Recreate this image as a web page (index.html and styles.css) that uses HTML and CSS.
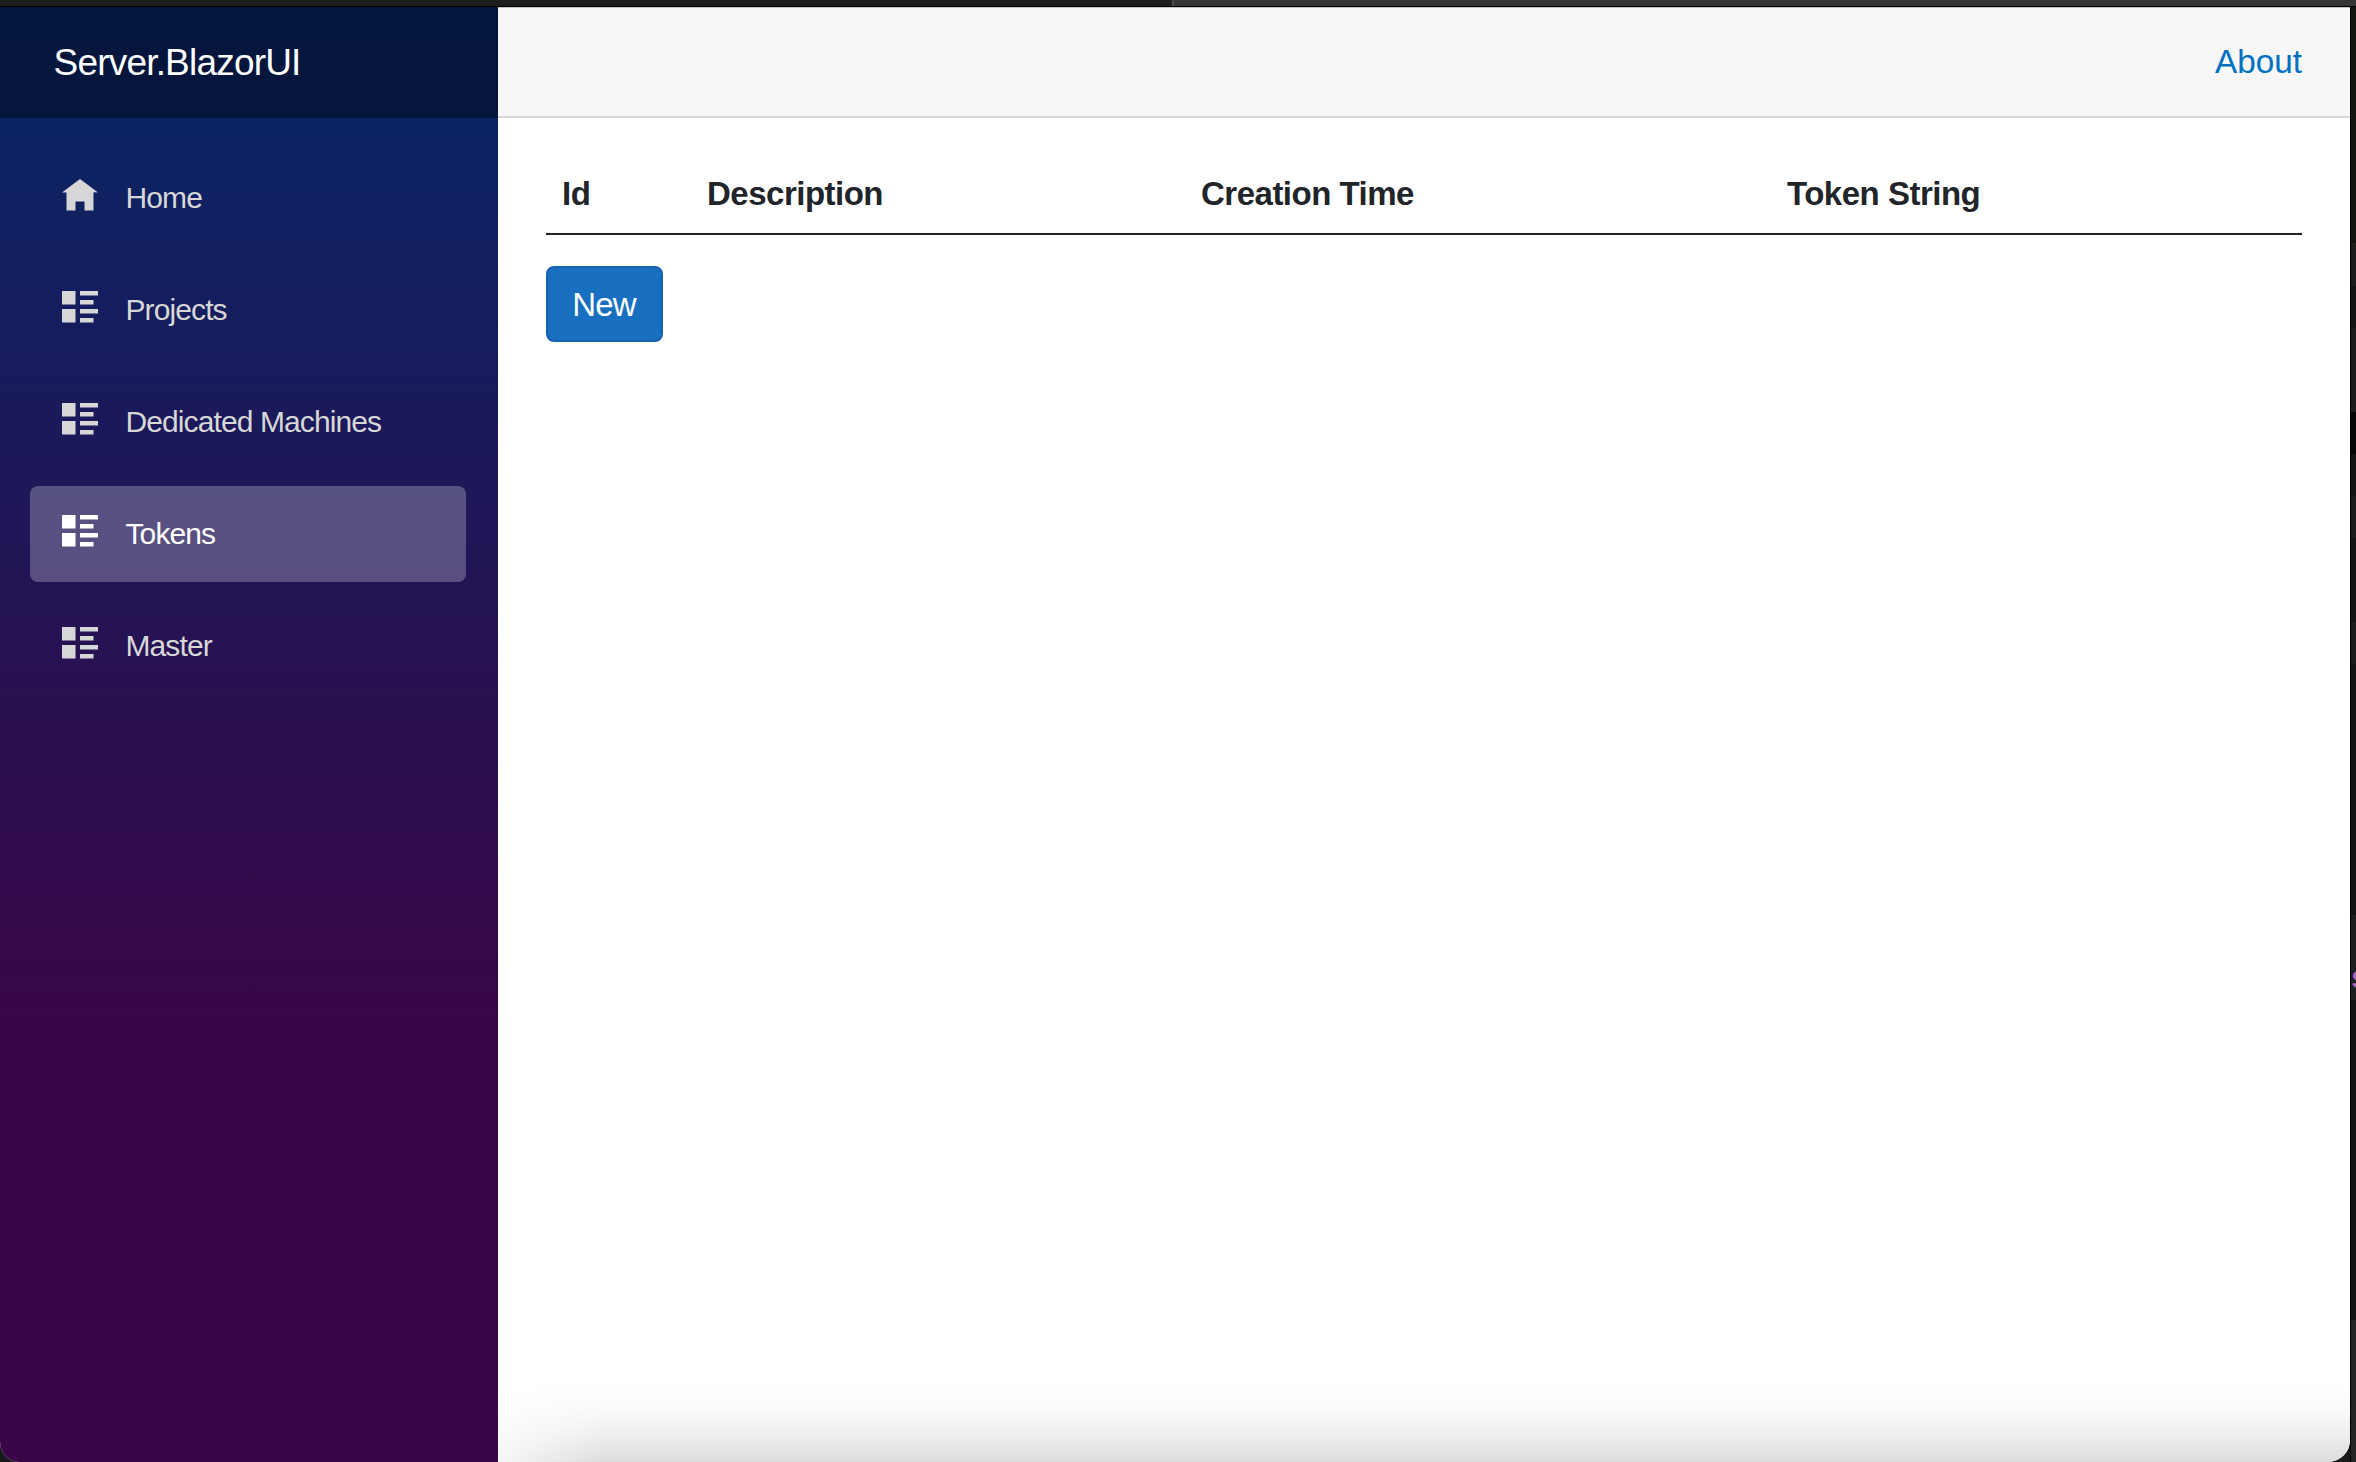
FILE: index.html
```html
<!DOCTYPE html>
<html lang="en">
<head>
<meta charset="utf-8">
<title>Server.BlazorUI</title>
<link rel="stylesheet" href="styles.css">
</head>
<body>
<svg class="sprite" aria-hidden="true">
  <symbol id="home" viewBox="0 0 8 8"><path d="M4 0l-4 3h1v4h2v-2h2v2h2v-4.03l1 .03-4-3z"/></symbol>
  <symbol id="list-rich" viewBox="0 0 8 8"><path d="M0 0v3h3v-3h-3zm4 0v1h4v-1h-4zm0 2v1h3v-1h-3zm-4 2v3h3v-3h-3zm4 0v1h4v-1h-4zm0 2v1h3v-1h-3z"/></symbol>
</svg>
<div class="backdrop-top"><div class="tab"></div></div>
<div class="desktop">
  <div class="window">
    <aside class="sidebar">
      <div class="brand">Server.BlazorUI</div>
      <nav class="menu">
        <a class="item"><svg class="icon"><use href="#home"/></svg><span>Home</span></a>
        <a class="item"><svg class="icon"><use href="#list-rich"/></svg><span>Projects</span></a>
        <a class="item"><svg class="icon"><use href="#list-rich"/></svg><span>Dedicated Machines</span></a>
        <a class="item active"><svg class="icon"><use href="#list-rich"/></svg><span>Tokens</span></a>
        <a class="item"><svg class="icon"><use href="#list-rich"/></svg><span>Master</span></a>
      </nav>
    </aside>
    <main class="main">
      <header class="top-row"><a class="about">About</a></header>
      <section class="content">
        <div class="table-head">
          <div>Id</div><div>Description</div><div>Creation Time</div><div>Token String</div>
        </div>
        <button class="btn">New</button>
      </section>
    </main>
  </div>
  <div class="edge"><span class="glyph">s</span></div>
</div>
</body>
</html>
```
FILE: styles.css
```css
* { box-sizing: border-box; }
body {
  margin: 0;
  width: 2356px;
  height: 1462px;
  overflow: hidden;
  display: flex;
  flex-direction: column;
  background: #181a1c;
  font: 32px/48px "Liberation Sans", Arial, sans-serif;
  color: #212529;
}
.sprite { position: absolute; width: 0; height: 0; }
.backdrop-top {
  height: 7px;
  flex: none;
  padding-left: 1172px;
  background: #1d1d1d;
  border-bottom: 1px solid #000;
}
.tab { height: 6px; background: #343537; border-left: 2px solid #48494b; }
.desktop { flex: 1; display: flex; min-height: 0; }
.window {
  width: 2350px;
  display: flex;
  overflow: hidden;
  border-radius: 0 0 22px 20px;
  background: #fff;
}
.sidebar {
  width: 498px;
  flex: none;
  background: linear-gradient(180deg, rgb(5, 39, 103) 0%, #3a0647 70%);
}
.brand {
  height: 111px;
  padding-left: 53.5px;
  line-height: 111px;
  font-size: 37px;
  letter-spacing: -0.8px;
  color: #fff;
  background: rgba(0, 0, 0, 0.4);
}
.menu { padding: 32px 32px 0 30px; display: flex; flex-direction: column; gap: 16px; }
.item {
  height: 96px;
  padding-left: 32px;
  display: flex;
  align-items: flex-start;
  gap: 27.5px;
  border-radius: 8px;
  font-size: 30px;
  letter-spacing: -0.9px;
  line-height: 96px;
  color: #d7d7d7;
}
.item.active { color: #fff; background: rgba(255, 255, 255, 0.25); }
.icon { width: 36px; height: 36px; margin-top: 28.5px; fill: currentColor; flex: none; }
.main {
  flex: 1;
  background:
    linear-gradient(90deg, rgba(255, 255, 255, 0.75), rgba(255, 255, 255, 0) 110px),
    linear-gradient(0deg, #dcdcdc 0, #ededed 25px, #f9f9f9 50px, #fff 78px);
}
.top-row {
  height: 111px;
  padding-right: 48px;
  display: flex;
  justify-content: flex-end;
  line-height: 107px;
  background: #f7f7f7;
  border-top: 1px solid #c4c4c0;
  border-bottom: 2px solid #d6d5d5;
}
.about { color: #0071c1; font-size: 33.3px; }
.content { padding: 35px 48px 0; display: flex; flex-direction: column; align-items: flex-start; }
.table-head {
  width: 100%;
  height: 82px;
  padding: 17px 0 0 16px;
  display: grid;
  grid-template-columns: 145px 494px 586px 1fr;
  font-size: 33px;
  font-weight: 700;
  letter-spacing: -0.5px;
  border-bottom: 2px solid #212529;
}
.btn {
  width: 117px;
  height: 76px;
  margin-top: 31px;
  padding: 2px 1px 0 0;
  font: inherit;
  font-size: 33px;
  letter-spacing: -0.8px;
  color: #fff;
  background: #186ebf;
  border: 2px solid #1861ac;
  border-radius: 8px;
}
.edge {
  flex: 1;
  overflow: hidden;
  border-left: 1px solid #000;
  background: linear-gradient(
    #14130d 236px, #1d1d1b 236px 279px, #141414 279px 321px,
    #1d1d1d 321px 405px, #060606 405px 447px, #141414 447px 489px,
    #1d1d1d 489px 531px, #141414 531px 615px, #1d1d1d 615px 657px,
    #141414 657px 908px, #1d1f1f 908px 993px, #141414 993px 1313px, #222426 1313px);
}
.glyph { display: block; margin-top: 946px; font-size: 32px; font-weight: 700; color: #b05cb0; }
```
